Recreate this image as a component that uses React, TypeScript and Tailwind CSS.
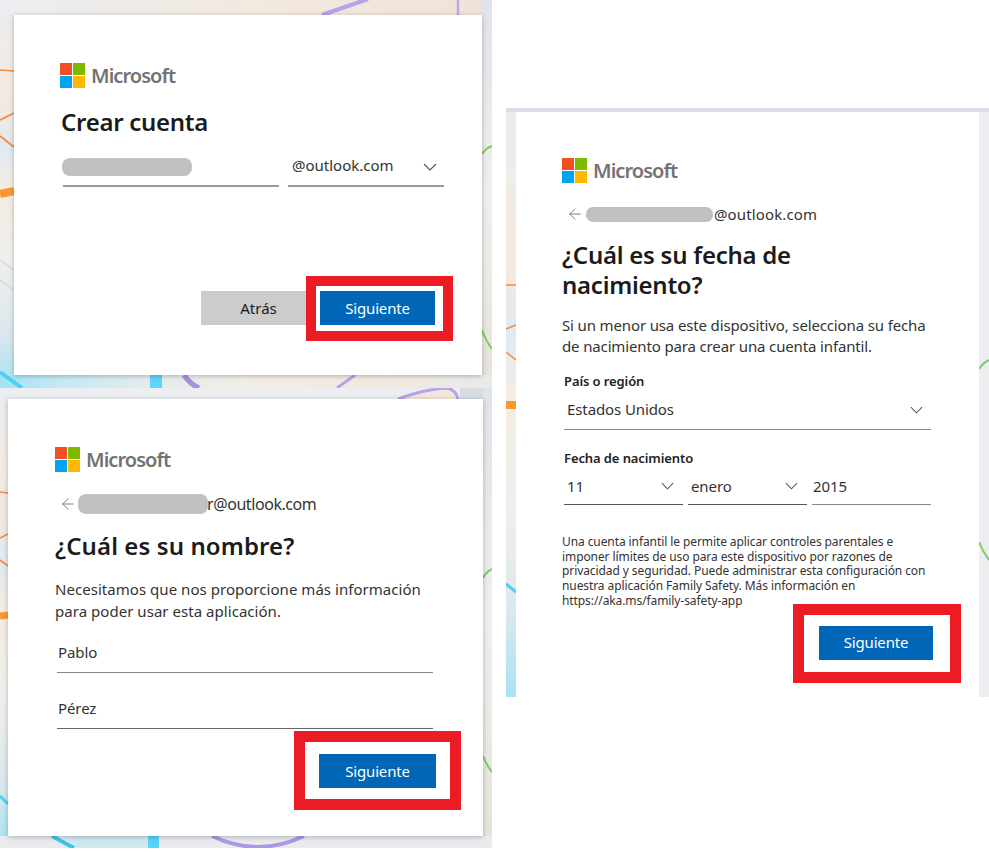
import React from "react";
import { ArrowLeft } from "lucide-react";

function Logo() {
  return (
    <div className="flex items-center h-[25px]">
      <div className="grid grid-cols-2 gap-[1px] w-[25px] h-[25px] shrink-0">
        <div className="bg-[#f25022]" />
        <div className="bg-[#7fba00]" />
        <div className="bg-[#00a4ef]" />
        <div className="bg-[#ffb900]" />
      </div>
      <span className="ml-[6px] text-[20px] font-semibold text-[#737373] tracking-[-0.95px] leading-[25px]">Microsoft</span>
    </div>
  );
}

function Chevron({ w = 14, className = "" }: { w?: number; className?: string }) {
  return (
    <svg width={w} height="8" viewBox="0 0 14 8" fill="none" className={`shrink-0 ${className}`}>
      <path d="M1 1l6 6 6-6" stroke="#555" strokeWidth="1.1" />
    </svg>
  );
}

function Siguiente({ w }: { w: string }) {
  return (
    <div className={`${w} h-[34px] bg-[#0067b8] text-white text-[15px] tracking-[-0.15px] flex items-center justify-center`}>
      Siguiente
    </div>
  );
}

function Bg({ children }: { children: React.ReactNode }) {
  return (
    <svg className="absolute inset-0 w-full h-full" fill="none">
      <defs>
        <filter id="soft" x="-20%" y="-20%" width="140%" height="140%">
          <feGaussianBlur stdDeviation="0.6" />
        </filter>
        <linearGradient id="left1" x1="0" y1="0" x2="0" y2="1">
          <stop offset="0" stopColor="#e9ebee" />
          <stop offset="0.12" stopColor="#f1ece8" />
          <stop offset="0.28" stopColor="#f4e8de" />
          <stop offset="0.38" stopColor="#dfeaf3" />
          <stop offset="0.48" stopColor="#f4ece3" />
          <stop offset="0.68" stopColor="#efefec" />
          <stop offset="0.85" stopColor="#dce8ec" />
          <stop offset="1" stopColor="#a8e3f4" />
        </linearGradient>
        <linearGradient id="peach" x1="0" y1="0" x2="1" y2="0">
          <stop offset="0" stopColor="#eceef1" />
          <stop offset="0.6" stopColor="#f3e8dd" />
          <stop offset="1" stopColor="#efe3d8" />
        </linearGradient>
        <linearGradient id="bottom1" x1="0" y1="0" x2="1" y2="0">
          <stop offset="0" stopColor="#9fe3f6" />
          <stop offset="0.12" stopColor="#c4e9f3" />
          <stop offset="0.3" stopColor="#e2ecee" />
          <stop offset="0.5" stopColor="#f2ede7" />
          <stop offset="0.75" stopColor="#f3e9df" />
          <stop offset="1" stopColor="#e9e9ea" />
        </linearGradient>
        <linearGradient id="right1" x1="0" y1="0" x2="0" y2="1">
          <stop offset="0" stopColor="#e0e3e9" />
          <stop offset="0.5" stopColor="#eef0ee" />
          <stop offset="1" stopColor="#e6e2da" />
        </linearGradient>
      </defs>
      {children}
    </svg>
  );
}

const row = "flex items-center text-[15px] text-[#333]";

export default function App() {
  return (
    <div className="relative w-[989px] h-[852px] bg-white overflow-hidden font-['Noto_Sans','Open_Sans',sans-serif]">
      {/* Window 1 */}
      <div className="absolute left-0 top-0 w-[492px] h-[388px] bg-[#f0eeea]">
        <Bg>
          <rect width="14" height="388" fill="url(#left1)" />
          <rect width="492" height="15" fill="url(#peach)" />
          <rect x="482" width="10" height="388" fill="url(#right1)" />
          <rect y="375" width="492" height="13" fill="url(#bottom1)" />
          <g filter="url(#soft)">
            <path d="M322 15L368 -1" stroke="#b4a2ec" strokeWidth="4" />
            <path d="M458 0V15" stroke="#b9a8ea" strokeWidth="2.5" />
            <path d="M0 70L14 71" stroke="#f58a3c" strokeWidth="1.6" />
            <path d="M0 120L14 113" stroke="#f58a3c" strokeWidth="1.6" />
            <path d="M0 136L14 147" stroke="#f58a3c" strokeWidth="1.8" />
            <path d="M0 194L14 191" stroke="#f9982f" strokeWidth="8" />
            <path d="M0 260L14 270M0 280L14 290" stroke="#d8dfe4" strokeWidth="2" />
            <path d="M482 154Q486 148 492 146" stroke="#7fcc5f" strokeWidth="2" />
            <path d="M482 330Q486 341 492 349" stroke="#7fcc5f" strokeWidth="2" />
            <path d="M0 372L22 388" stroke="#4fcdf2" strokeWidth="4" />
            <rect x="150" y="375" width="12" height="13" fill="#5dd6fb" />
            <path d="M184 375Q190 384 199 388" stroke="#a88ee2" strokeWidth="5" />
            <path d="M355 375L337 388" stroke="#b4a2ec" strokeWidth="3" />
          </g>
        </Bg>
        <div className="absolute left-[14px] top-[15px] w-[468px] h-[360px] bg-white shadow-[0_1px_5px_rgba(0,0,0,0.25)] pt-[48px] pl-[46px] pr-[47px]">
          <Logo />
          <h1 className="mt-[18px] ml-[1px] h-[32px] text-[24px] leading-[32px] font-semibold text-[#1b1b1b] tracking-[-0.3px]">Crear cuenta</h1>
          <div className="mt-[15px] flex gap-[9px] pl-[3px] pr-0 -mr-[9px]">
            <div className="w-[216px] h-[34px] border-b-[2px] border-[#999] flex items-center">
              <div className="w-[130px] h-[18px] -ml-[1px] rounded-[8px] bg-[#c0c0c0] -mt-[4px]" />
            </div>
            <div className="w-[156px] h-[34px] border-b-[2px] border-[#999] flex items-center justify-between pl-[4px] pr-[7px] text-[15px] text-[#333]">
              <span className="-mt-[7px]">@outlook.com</span>
              <Chevron className="-mt-[5px]" />
            </div>
          </div>
          <div className="mt-[104px] flex justify-end">
            <div className="w-[115px] h-[34px] bg-[#cccccc] text-[#1b1b1b] text-[15px] flex items-center justify-center">Atrás</div>
            <div className="ml-[4px]"><Siguiente w="w-[115px]" /></div>
          </div>
          <div className="absolute left-[292px] top-[261px] w-[147px] h-[65px] border-[10px] border-[#ed1c24]" />
        </div>
      </div>

      {/* Window 2 */}
      <div className="absolute left-0 top-[388px] w-[492px] h-[460px] bg-[#eceef0]">
        <Bg>
          <rect width="8" height="460" fill="url(#left1)" />
          <rect width="492" height="11" fill="#eceef2" />
          <rect x="460" width="32" height="11" fill="#d7dbe3" />
          <rect x="483" width="9" height="460" fill="url(#right1)" />
          <path d="M398 11Q425 2 447 0Q456 2 458 11Z" fill="#f3e6da" />
          <rect y="448" width="492" height="12" fill="#eaebee" />
          <path d="M62 448H148V460H78Z" fill="#cfe9f0" />
          <g filter="url(#soft)">
            <path d="M398 11Q425 1 447 0Q456 2 458 11" stroke="#b4a2ec" strokeWidth="3" />
            <path d="M0 104L8 105M0 150L8 146M0 172L8 178" stroke="#f58a3c" strokeWidth="1.6" />
            <path d="M0 228L8 227" stroke="#f9982f" strokeWidth="7" />
            <path d="M483 190Q486 184 492 181" stroke="#7fcc5f" strokeWidth="2" />
            <path d="M483 368Q487 378 492 384" stroke="#7fcc5f" strokeWidth="2" />
            <path d="M0 408L8 416" stroke="#4fcdf2" strokeWidth="3" />
            <path d="M52 448L74 460" stroke="#3dc4ea" strokeWidth="4" />
            <rect x="148" y="448" width="11" height="12" fill="#55d4fb" />
            <path d="M212 448Q258 470 304 448" stroke="#ae98e6" strokeWidth="4" />
          </g>
        </Bg>
        <div className="absolute left-[8px] top-[11px] w-[475px] h-[437px] bg-white shadow-[0_1px_5px_rgba(0,0,0,0.25)] pt-[48px] pl-[47px] pr-[47px]">
          <Logo />
          <div className={`mt-[20px] h-[24px] ${row}`}>
            <ArrowLeft size={18} strokeWidth={1.1} className="ml-[4px] text-[#666]" />
            <div className="relative ml-[1px] w-[130px] h-[20px] rounded-[8px] bg-[#c0c0c0] -mr-[1px]" />
            <span className="text-[16px] tracking-[-0.43px]">r@outlook.com</span>
          </div>
          <h1 className="mt-[14px] h-[31px] text-[24px] leading-[31px] font-semibold text-[#1b1b1b] tracking-[0.1px] whitespace-nowrap">¿Cuál es su nombre?</h1>
          <p className="mt-[17px] text-[15px] leading-[22px] text-[#333] tracking-[0.04px] whitespace-nowrap">
            Necesitamos que nos proporcione más información
            <br />
            para poder usar esta aplicación.
          </p>
          <div className="mt-[16px] ml-[2px] w-[376px] h-[35px] border-b-[1.5px] border-[#888] pl-[1px] text-[15px] text-[#333] tracking-[-0.1px] leading-[29px]">Pablo</div>
          <div className="mt-[21px] ml-[2px] w-[376px] h-[35px] border-b-[1.5px] border-[#666] pl-[1px] text-[15px] text-[#333] tracking-[-0.1px] leading-[29px]">Pérez</div>
          <div className="mt-[25px] flex justify-end"><Siguiente w="w-[117px]" /></div>
          <div className="absolute left-[286px] top-[332px] w-[167px] h-[79px] border-[11px] border-[#ed1c24]" />
        </div>
      </div>

      {/* Window 3 */}
      <div className="absolute left-[506px] top-[108px] w-[483px] h-[589px] bg-[#eceef0]">
        <Bg>
          <rect width="10" height="589" fill="url(#left1)" />
          <rect width="483" height="4" fill="#dadee7" />
          <rect x="473" y="4" width="10" height="585" fill="#ecedf0" />
          <g filter="url(#soft)">
            <path d="M0 177H10M0 221L10 217M0 244L10 252" stroke="#f58a3c" strokeWidth="1.6" />
            <path d="M0 297H10" stroke="#f9982f" strokeWidth="8" />
            <path d="M473 261Q477 255 483 252" stroke="#7fcc5f" strokeWidth="2" />
            <path d="M473 434Q477 444 483 452" stroke="#7fcc5f" strokeWidth="2" />
            <path d="M0 476L10 484" stroke="#4fcdf2" strokeWidth="3" />
          </g>
        </Bg>
        <div className="absolute left-[10px] top-[4px] w-[463px] h-[585px] bg-white pt-[46px] pl-[46px] pr-[46px]">
          <Logo />
          <div className={`mt-[19px] h-[24px] ${row}`}>
            <ArrowLeft size={18} strokeWidth={1.1} className="ml-[4px] text-[#666]" />
            <div className="ml-[2px] w-[127px] h-[15px] rounded-[7px] bg-[#c0c0c0] mr-[1px]" />
            <span className="text-[15px] tracking-[0.13px]">@outlook.com</span>
          </div>
          <h1 className="mt-[14px] text-[24px] leading-[30px] font-semibold text-[#1b1b1b] tracking-[-0.25px]">
            ¿Cuál es su fecha de
            <br />
            nacimiento?
          </h1>
          <p className="mt-[15px] text-[15px] leading-[21px] text-[#333] tracking-[-0.14px] whitespace-nowrap">
            Si un menor usa este dispositivo, selecciona su fecha
            <br />
            de nacimiento para crear una cuenta infantil.
          </p>
          <div className="mt-[14px] ml-[2px] text-[13px] leading-[20px] font-semibold text-[#222] tracking-[-0.1px]">País o región</div>
          <div className="mt-[2px] ml-[2px] w-[367px] h-[37px] border-b-[1.5px] border-[#888] flex items-center justify-between pl-[3px] pr-[8px] text-[15px] text-[#333] tracking-[-0.1px]">
            <span className="-mt-[3px]">Estados Unidos</span>
            <Chevron w={13} className="-mt-[3px]" />
          </div>
          <div className="mt-[18px] ml-[2px] text-[13px] leading-[20px] font-semibold text-[#222] tracking-[-0.1px]">Fecha de nacimiento</div>
          <div className="mt-[2px] ml-[2px] w-[367px] grid grid-cols-3 gap-[5px] text-[15px] text-[#333] tracking-[-0.1px]">
            <div className="h-[35px] border-b-[1.5px] border-[#555] flex items-center justify-between pl-[3px] pr-[9px]">
              <span className="-mt-[2px]">11</span>
              <Chevron w={13} className="-mt-[3px]" />
            </div>
            <div className="h-[35px] border-b-[1.5px] border-[#555] flex items-center justify-between pl-[3px] pr-[9px]">
              <span className="-mt-[2px]">enero</span>
              <Chevron w={13} className="-mt-[3px]" />
            </div>
            <div className="h-[35px] border-b-[1.5px] border-[#888] flex items-center pl-[1px]">
              <span className="-mt-[2px]">2015</span>
            </div>
          </div>
          <p className="mt-[30px] text-[12px] leading-[14.7px] text-[#333] tracking-[-0.09px] whitespace-nowrap">
            Una cuenta infantil le permite aplicar controles parentales e
            <br />
            imponer límites de uso para este dispositivo por razones de
            <br />
            privacidad y seguridad. Puede administrar esta configuración con
            <br />
            nuestra aplicación Family Safety. Más información en
            <br />
            https://aka.ms/family-safety-app
          </p>
          <div className="mt-[17px] flex justify-end">
            <Siguiente w="w-[114px]" />
          </div>
          <div className="absolute left-[277px] top-[492px] w-[168px] h-[79px] border-[11px] border-[#ed1c24]" />
        </div>
      </div>
    </div>
  );
}
